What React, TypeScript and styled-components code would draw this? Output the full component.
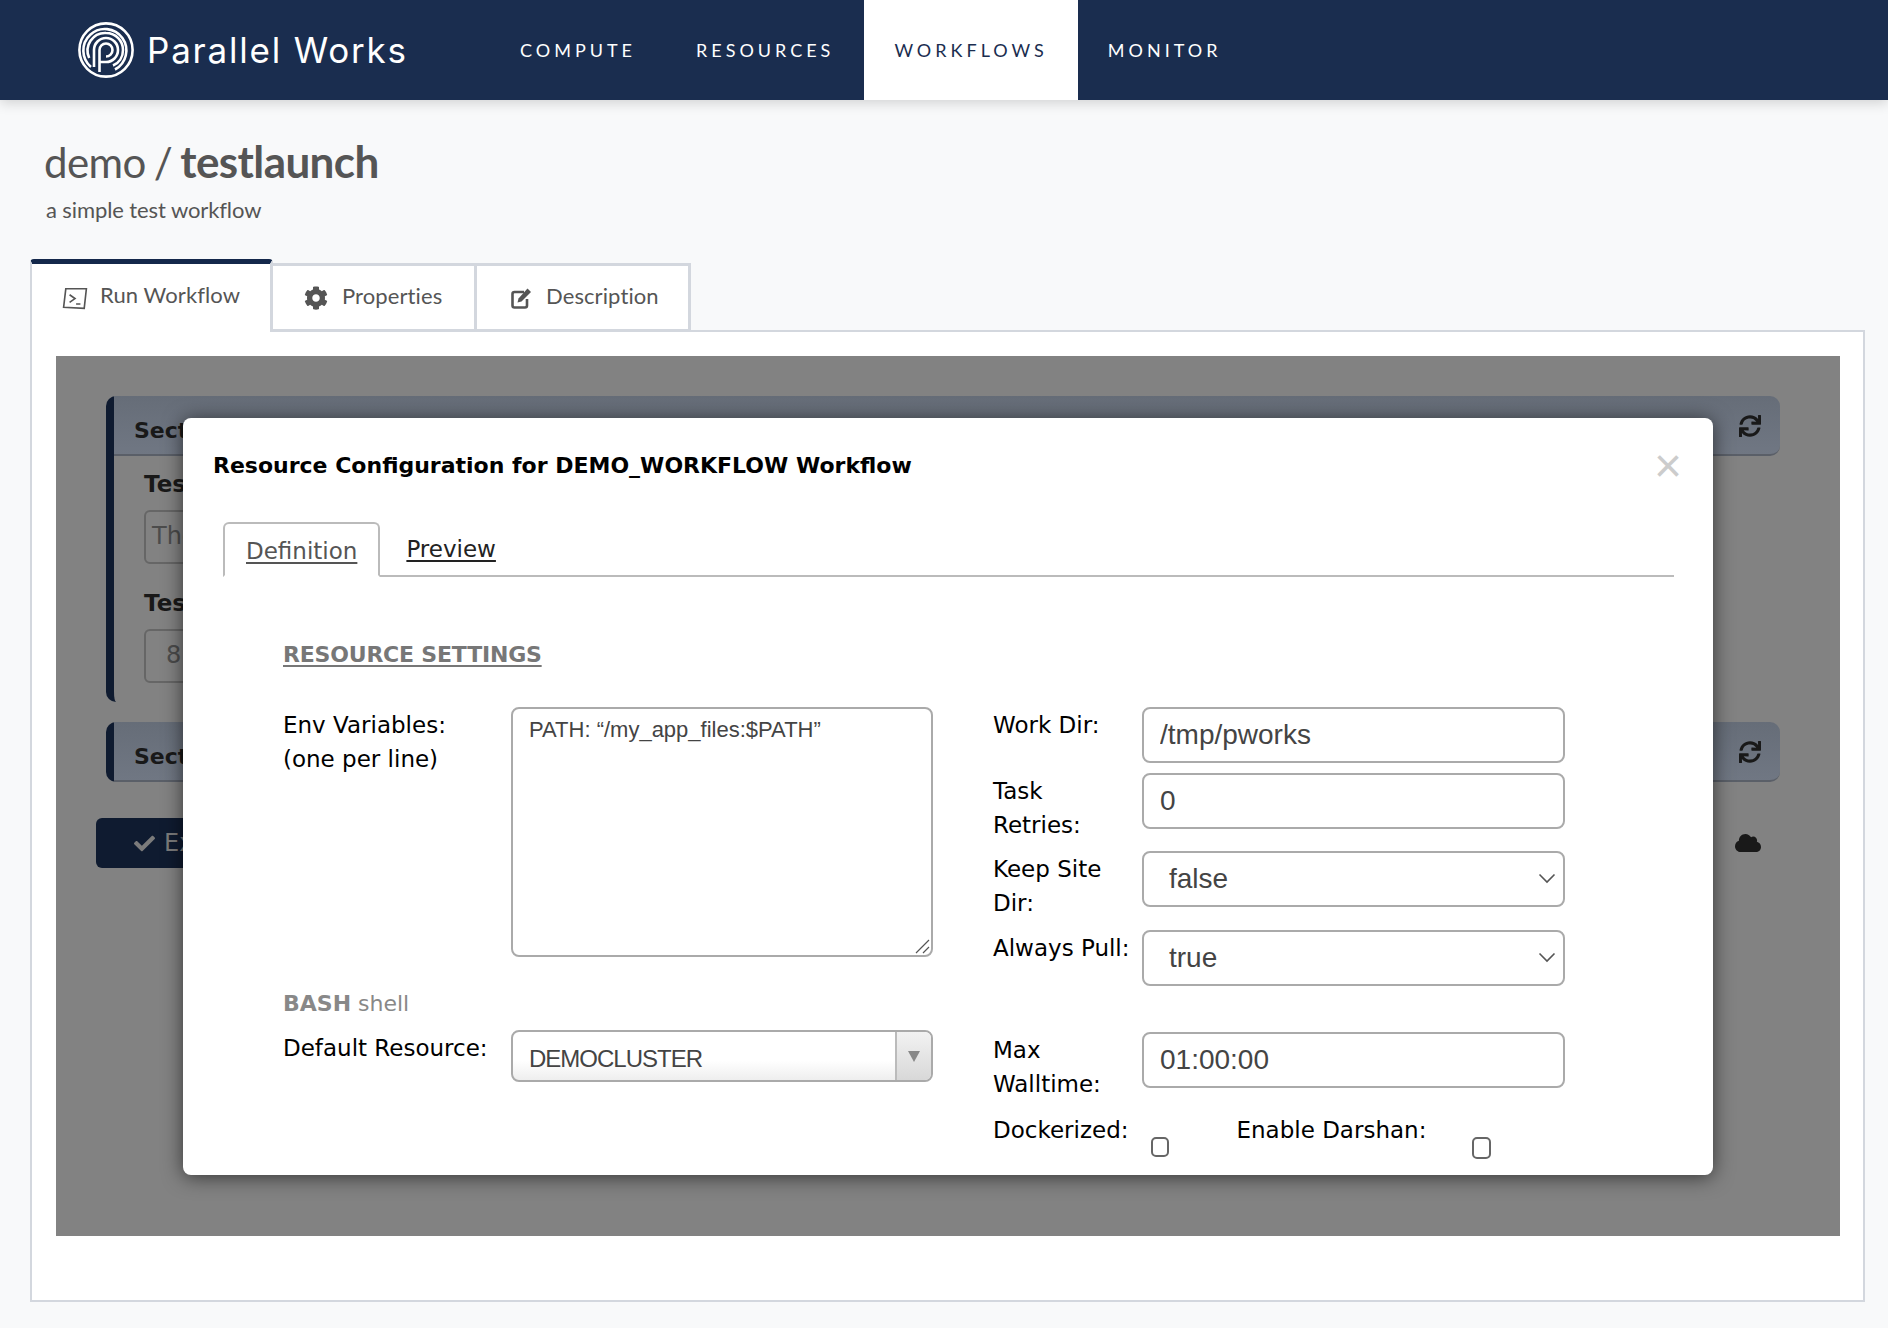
import styled, { createGlobalStyle } from "styled-components";
import { FC, ReactNode } from "react";
import { FaCheck, FaCloud, FaCog, FaSync } from "react-icons/fa";

const GlobalStyle = createGlobalStyle`
  html, body {
    margin: 0;
    padding: 0;
    background: #f8f9fa;
    font-family: "Lato", sans-serif;
  }
  * { box-sizing: border-box; }
`;

const modalFont = `"DejaVu Sans", "Liberation Sans", sans-serif`;
const fieldFont = `"Liberation Sans", Arial, sans-serif`;

const Page = styled.div`
  width: 1888px;
  height: 1328px;
  overflow: hidden;
`;

const NavBar = styled.header`
  display: flex;
  height: 100px;
  background: #1a2d4f;
  box-shadow: 0 3px 12px rgba(0, 0, 0, 0.16);
  padding-left: 78px;
`;

const Brand = styled.div`
  display: flex;
  align-items: center;
  width: 412px;
  gap: 13px;
`;

const BrandName = styled.span`
  font-family: "Inter", sans-serif;
  font-size: 35px;
  font-weight: 400;
  color: #fff;
  letter-spacing: 1.8px;
  white-space: nowrap;
`;

const NavItem = styled.a<{ $active?: boolean }>`
  display: flex;
  align-items: center;
  padding: 0 30px;
  font-size: 18px;
  letter-spacing: 4px;
  background: ${(p) => (p.$active ? "#fff" : "transparent")};
  color: ${(p) => (p.$active ? "#1a2d4f" : "#fff")};
`;

const Header = styled.div`
  padding: 36px 0 0 44px;
  color: #555;
`;

const Title = styled.h1`
  margin: 0;
  font-size: 42px;
  line-height: 50px;
  font-weight: 400;
  letter-spacing: -0.6px;
  word-spacing: -2px;
  b {
    font-weight: 700;
    font-size: 44px;
  }
`;

const Subtitle = styled.p`
  margin: 9px 0 0 2px;
  font-size: 22px;
  line-height: 28px;
  letter-spacing: -0.1px;
`;

const TabBar = styled.div`
  display: flex;
  margin: 35px 0 0 30px;
  height: 73px;
  position: relative;
  z-index: 1;
`;

const PageTab = styled.div<{ $active?: boolean; $w: number }>`
  width: ${(p) => p.$w}px;
  margin-top: ${(p) => (p.$active ? "0" : "4px")};
  height: ${(p) => (p.$active ? "73px" : "69px")};
  display: flex;
  align-items: flex-start;
  gap: ${(p) => (p.$active ? "12px" : "14px")};
  padding: ${(p) => (p.$active ? "17px 0 0 30px" : "16px 0 0 31px")};
  background: #fff;
  font-size: 22px;
  line-height: 28px;
  letter-spacing: 0.1px;
  color: #555;
  border: 3px solid #d3d7de;
  border-top: ${(p) => (p.$active ? "5px solid #14284b" : "3px solid #d3d7de")};
  border-bottom: ${(p) => (p.$active ? "none" : "3px solid #d3d7de")};
  border-left-width: ${(p) => (p.$active ? "2px" : "0")};
  border-radius: ${(p) => (p.$active ? "4px 4px 0 0" : "0")};
  svg { flex: none; margin-top: 4px; }
`;

const Panel = styled.div`
  margin: -2px 0 0 30px;
  width: 1835px;
  height: 972px;
  background: #fff;
  border: 2px solid #d3d7de;
  padding: 24px 24px;
`;

const Backdrop = styled.div`
  position: relative;
  width: 1784px;
  height: 880px;
  background: #828282;
  padding: 40px 60px 0 40px;
`;

const Section = styled.div<{ $h: number }>`
  position: relative;
  margin: 0 0 20px 10px;
  width: 1674px;
  height: ${(p) => p.$h}px;
  border-left: 8px solid #0f1b30;
  border-radius: 10px;
`;

const SectionHead = styled.div`
  display: flex;
  justify-content: space-between;
  align-items: center;
  height: 60px;
  padding: 11px 19px 0 20px;
  background: linear-gradient(#666d78, #707783);
  border-bottom: 2px solid #5a5f68;
  border-radius: 0 10px 10px 0;
  font-family: ${modalFont};
  font-weight: 700;
  font-size: 22px;
  color: #191919;
  svg { margin-top: -10px; }
`;

const SectionBody = styled.div`
  padding: 13px 0 0 30px;
  font-family: ${modalFont};
`;

const BgLabel = styled.div`
  font-weight: 700;
  font-size: 23px;
  line-height: 30px;
  color: #191919;
`;

const BgInput = styled.div<{ $pad: number }>`
  width: 200px;
  height: 54px;
  margin: 11px 0 24px;
  padding: 10px ${(p) => p.$pad}px;
  border: 2px solid #666;
  border-radius: 6px;
  font-size: 24px;
  color: #4c4c4c;
`;

const FootRow = styled.div`
  display: flex;
  justify-content: space-between;
  align-items: center;
  width: 1696px;
  padding-right: 31px;
  margin-top: 36px;
`;

const RunButton = styled.div`
  display: flex;
  align-items: center;
  gap: 9px;
  width: 200px;
  height: 50px;
  padding-left: 38px;
  background: #0f1b30;
  border-radius: 6px;
  color: #7b7b7b;
  font-size: 24px;
  font-family: ${modalFont};
`;

const Modal = styled.div`
  position: absolute;
  left: 127px;
  top: 62px;
  width: 1530px;
  height: 757px;
  background: #fff;
  border-radius: 8px;
  box-shadow: 0 2px 20px rgba(0, 0, 0, 0.6);
  font-family: ${modalFont};
  padding: 32px 33px 0 30px;
`;

const ModalHead = styled.div`
  display: flex;
  justify-content: space-between;
  align-items: flex-start;
`;

const ModalTitle = styled.h2`
  margin: 0;
  font-size: 22px;
  line-height: 32px;
  font-weight: 700;
  color: #000;
`;

const Close = styled.span`
  color: #ccc;
  font-family: "Liberation Sans", sans-serif;
  font-size: 48px;
  line-height: 32px;
  margin-right: -2px;
`;

const ModalTabs = styled.div`
  display: flex;
  margin: 40px 0 0 10px;
  height: 55px;
  width: 1451px;
  border-bottom: 2px solid #bbb;
`;

const ModalTab = styled.a<{ $active?: boolean }>`
  height: 55px;
  padding: 12px 21px 0;
  font-size: 23px;
  line-height: 30px;
  text-decoration: underline;
  text-underline-offset: 3px;
  color: ${(p) => (p.$active ? "#555" : "#222")};
  ${(p) =>
    p.$active
      ? `background:#fff;border:2px solid #bbb;border-bottom-color:#fff;border-radius:6px 6px 0 0;`
      : "padding-left: 26px;"}
`;

const SettingsTitle = styled.div`
  margin: 63px 0 0 70px;
  font-size: 22px;
  line-height: 30px;
  letter-spacing: -0.2px;
  font-weight: 700;
  color: #777;
  text-decoration: underline;
  text-underline-offset: 3px;
`;

const Columns = styled.div`
  display: grid;
  grid-template-columns: 710px 571px;
  margin: 37px 0 0 70px;
`;

const Column = styled.div`
  display: flex;
  flex-direction: column;
`;

const FieldRow = styled.div<{ $gap?: number; $h?: number }>`
  display: grid;
  grid-template-columns: var(--label-w) 1fr;
  align-items: flex-start;
  margin-top: ${(p) => p.$gap ?? 0}px;
  ${(p) => (p.$h ? `height:${p.$h}px;` : "")}
`;

const LeftCol = styled(Column)`
  --label-w: 228px;
`;

const RightCol = styled(Column)`
  --label-w: 149px;
`;

const Label = styled.label`
  padding-top: 1px;
  font-size: 23px;
  line-height: 34px;
  color: #000;
`;

const DarshanLabel = styled(Label)`
  margin-left: 68px;
`;

const AreaWrap = styled.div`
  position: relative;
  width: 422px;
  height: 250px;
`;

const TextArea = styled.textarea`
  display: block;
  width: 100%;
  height: 100%;
  padding: 8px 16px;
  border: 2px solid #aaa;
  border-radius: 8px;
  background: #fff;
  font-family: ${fieldFont};
  font-size: 22px;
  line-height: 26px;
  color: #444;
  resize: none;
`;

const Grip = styled.svg`
  position: absolute;
  right: 3px;
  bottom: 3px;
`;

const ShellNote = styled.div`
  margin-top: 32px;
  font-size: 22px;
  line-height: 30px;
  color: #888;
  b { font-weight: 700; }
`;

const Combo = styled.div`
  display: flex;
  width: 422px;
  height: 52px;
  border: 2px solid #aaa;
  border-radius: 8px;
  overflow: hidden;
  background: linear-gradient(#fff 60%, #eee);
`;

const ComboText = styled.span`
  flex: 1;
  padding: 11px 16px 0;
  font-family: ${fieldFont};
  font-size: 24px;
  letter-spacing: -1px;
  line-height: 32px;
  color: #444;
`;

const ComboArrow = styled.span`
  width: 36px;
  display: flex;
  align-items: center;
  justify-content: center;
  border-left: 2px solid #bbb;
  background: linear-gradient(#f2f2f2, #d8d8d8);
  &::after {
    content: "";
    border-left: 6px solid transparent;
    border-right: 6px solid transparent;
    border-top: 11px solid #888;
  }
`;

const TextInput = styled.input`
  display: block;
  width: 423px;
  height: 56px;
  padding: 0 16px;
  border: 2px solid #aaa;
  border-radius: 8px;
  background: #fff;
  font-family: ${fieldFont};
  font-size: 28px;
  color: #444;
`;

const SelectBox = styled.div`
  position: relative;
  display: flex;
  align-items: center;
  width: 423px;
  height: 56px;
  padding-left: 25px;
  border: 2px solid #aaa;
  border-radius: 8px;
  font-family: ${fieldFont};
  font-size: 28px;
  color: #444;
  svg {
    position: absolute;
    right: 7px;
    top: 20px;
  }
`;

const CheckRow = styled.div`
  display: flex;
  align-items: flex-start;
  margin-top: 8px;
`;

const CheckBox = styled.span<{ $ml: number; $w: number; $h: number }>`
  display: block;
  flex: none;
  width: ${(p) => p.$w}px;
  height: ${(p) => p.$h}px;
  margin: 25px 0 0 ${(p) => p.$ml}px;
  border: 2px solid #666;
  border-radius: 5px;
`;

const Logo: FC = () => (
  <svg width="56" height="56" viewBox="0 0 56 56" fill="none" stroke="#fff" strokeWidth="2.6">
    <circle cx="28" cy="28" r="26.6" />
    <path d="M13 45A21.5 21.5 0 1 1 37 47.5" />
    <path d="M11.2 36A17.6 17.6 0 0 1 28 11C38 11 45 19 45 28C45 35 41 41 35 43.5" />
    <path d="M16 45V28A12 12 0 1 1 28 40H21.5" />
    <path d="M21.5 50V28A6.5 6.5 0 1 1 28 34.5" />
  </svg>
);

const TerminalIcon: FC = () => (
  <svg width="26" height="26" viewBox="0 0 24 24" fill="none" stroke="#555" strokeWidth="1.5">
    <path d="M3.5 3.5L22.5 3.5L20.5 21.5L1.5 20.5Z" />
    <path d="M7 9L12 12.5L7 16M13 17.5H17" />
  </svg>
);

const EditIcon: FC = () => (
  <svg width="24" height="24" viewBox="0 0 24 24">
    <path d="M16 6H6.5A2 2 0 0 0 4.5 8V19.5A2 2 0 0 0 6.5 21.5H17A2 2 0 0 0 19 19.5V13" fill="none" stroke="#555" strokeWidth="2.6" />
    <path d="M19.5 2.5L23 6L13.5 15.5L9.5 16.5L10.5 12.5Z" fill="#555" />
  </svg>
);

const Chevron: FC = () => (
  <svg width="18" height="11" viewBox="0 0 18 11" fill="none" stroke="#555" strokeWidth="1.6">
    <path d="M1.5 1.5L9 9L16.5 1.5" />
  </svg>
);

const Field: FC<{ label: ReactNode; gap?: number; h?: number; children: ReactNode }> = ({ label, gap, h, children }) => (
  <FieldRow $gap={gap} $h={h}>
    <Label>{label}</Label>
    <div>{children}</div>
  </FieldRow>
);

const App: FC = () => (
  <Page>
    <GlobalStyle />
    <NavBar>
      <Brand>
        <Logo />
        <BrandName>Parallel Works</BrandName>
      </Brand>
      <NavItem>COMPUTE</NavItem>
      <NavItem>RESOURCES</NavItem>
      <NavItem $active>WORKFLOWS</NavItem>
      <NavItem>MONITOR</NavItem>
    </NavBar>
    <Header>
      <Title>
        demo / <b>testlaunch</b>
      </Title>
      <Subtitle>a simple test workflow</Subtitle>
    </Header>
    <TabBar>
      <PageTab $active $w={243}>
        <TerminalIcon />
        Run Workflow
      </PageTab>
      <PageTab $w={204}>
        <FaCog size={24} />
        Properties
      </PageTab>
      <PageTab $w={214}>
        <EditIcon />
        Description
      </PageTab>
    </TabBar>
    <Panel>
      <Backdrop>
        <Section $h={306}>
          <SectionHead>
            Section
            <FaSync size={22} />
          </SectionHead>
          <SectionBody>
            <BgLabel>Test</BgLabel>
            <BgInput $pad={6}>The</BgInput>
            <BgLabel>Test</BgLabel>
            <BgInput $pad={20}>8</BgInput>
          </SectionBody>
        </Section>
        <Section $h={60}>
          <SectionHead>
            Section
            <FaSync size={22} />
          </SectionHead>
        </Section>
        <FootRow>
          <RunButton>
            <FaCheck size={21} />
            Execute
          </RunButton>
          <FaCloud size={26} color="#191919" />
        </FootRow>
        <Modal>
          <ModalHead>
            <ModalTitle>Resource Configuration for DEMO_WORKFLOW Workflow</ModalTitle>
            <Close>×</Close>
          </ModalHead>
          <ModalTabs>
            <ModalTab $active>Definition</ModalTab>
            <ModalTab>Preview</ModalTab>
          </ModalTabs>
          <SettingsTitle>RESOURCE SETTINGS</SettingsTitle>
          <Columns>
            <LeftCol>
              <Field label={<>Env Variables:<br />(one per line)</>}>
                <AreaWrap>
                  <TextArea readOnly defaultValue="PATH: “/my_app_files:$PATH”" />
                  <Grip width="15" height="15" viewBox="0 0 15 15" stroke="#555" strokeWidth="1.2">
                    <path d="M1 14L14 1M8 14L14 8" />
                  </Grip>
                </AreaWrap>
              </Field>
              <ShellNote>
                <b>BASH</b> shell
              </ShellNote>
              <Field label="Default Resource:" gap={11}>
                <Combo>
                  <ComboText>DEMOCLUSTER</ComboText>
                  <ComboArrow />
                </Combo>
              </Field>
            </LeftCol>
            <RightCol>
              <Field label="Work Dir:" h={66}>
                <TextInput readOnly defaultValue="/tmp/pworks" />
              </Field>
              <Field label={<>Task<br />Retries:</>} h={78}>
                <TextInput readOnly defaultValue="0" />
              </Field>
              <Field label={<>Keep Site<br />Dir:</>} h={79}>
                <SelectBox>
                  false
                  <Chevron />
                </SelectBox>
              </Field>
              <Field label="Always Pull:" h={102}>
                <SelectBox>
                  true
                  <Chevron />
                </SelectBox>
              </Field>
              <Field label={<>Max<br />Walltime:</>} h={72}>
                <TextInput readOnly defaultValue="01:00:00" />
              </Field>
              <CheckRow>
                <Label>Dockerized:</Label>
                <CheckBox $ml={22} $w={18} $h={20} />
                <DarshanLabel>Enable Darshan:</DarshanLabel>
                <CheckBox $ml={46} $w={19} $h={22} />
              </CheckRow>
            </RightCol>
          </Columns>
        </Modal>
      </Backdrop>
    </Panel>
  </Page>
);

export default App;
